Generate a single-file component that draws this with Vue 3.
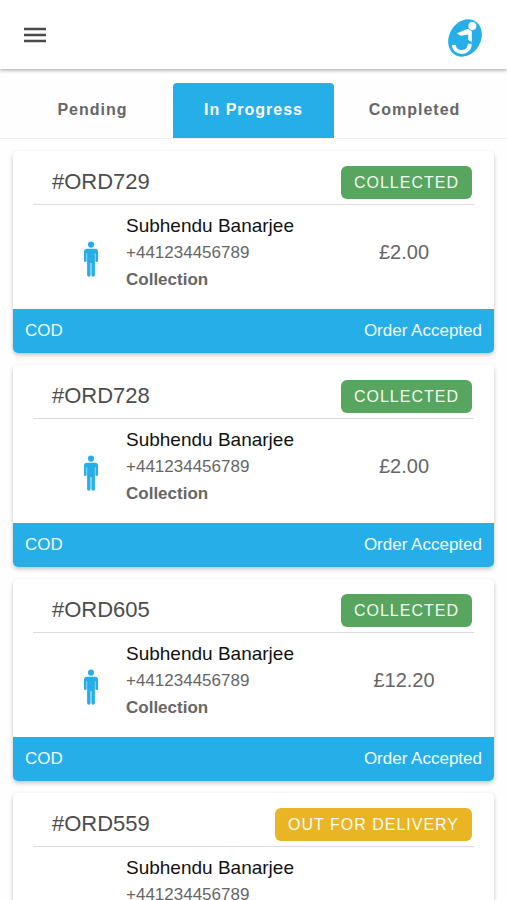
<script setup>
import { ref } from 'vue'

const tabs = ['Pending', 'In Progress', 'Completed']
const activeTab = ref('In Progress')

const customer = { name: 'Subhendu Banarjee', phone: '+441234456789' }
const orders = [
  { id: '#ORD729', status: 'Collected', tone: 'success', type: 'Collection', price: '£2.00', ...customer },
  { id: '#ORD728', status: 'Collected', tone: 'success', type: 'Collection', price: '£2.00', ...customer },
  { id: '#ORD605', status: 'Collected', tone: 'success', type: 'Collection', price: '£12.20', ...customer },
  { id: '#ORD559', status: 'Out for delivery', tone: 'warning', type: 'Delivery', price: '£12.20', ...customer },
]
</script>

<template>
  <div class="page">
    <header class="toolbar">
      <button class="menu" type="button" aria-label="Menu">
        <svg width="24" height="18" viewBox="0 0 24 18" aria-hidden="true">
          <path d="M1 3h22M1 9h22M1 15h22" stroke="#4a4a4a" stroke-width="2.4" />
        </svg>
      </button>
      <svg class="logo" width="36" height="40" viewBox="0 0 36 40" aria-hidden="true">
        <ellipse cx="18" cy="20" rx="15.8" ry="19.6" transform="rotate(30 18 20)" fill="#25aee8" />
        <path d="M9.600 15.600 L20 11 L24.800 11 L24.800 24 L21.200 22 L21.200 16.400 L14 17.800 Z" fill="#fff" />
        <circle cx="25.400" cy="8" r="4.500" fill="#fff" stroke="#25aee8" stroke-width="0.9" />
        <path d="M6.800 26.800 C7.600 36.600 22.800 36.400 22.800 25.800" fill="none" stroke="#fff" stroke-width="3.900" />
      </svg>
    </header>

    <nav class="tabs" role="tablist">
      <button
        v-for="tab in tabs"
        :key="tab"
        type="button"
        role="tab"
        class="tab"
        :class="{ active: tab === activeTab }"
        :aria-selected="tab === activeTab"
        @click="activeTab = tab"
      >{{ tab }}</button>
    </nav>

    <main class="orders">
      <article v-for="order in orders" :key="order.id" class="card">
        <div class="card-head">
          <h2 class="order-id">{{ order.id }}</h2>
          <button type="button" class="status" :class="order.tone">{{ order.status }}</button>
        </div>
        <div class="card-body" :class="{ delivery: order.type === 'Delivery' }">
          <svg class="person" width="16" height="36" viewBox="0 0 16 36" aria-hidden="true">
            <g fill="#25aee8">
              <circle cx="8" cy="3.6" r="3.1" />
              <path d="M4 7.8h8a3 3 0 0 1 3 3v9a1.3 1.3 0 0 1-2.600 0v-7.600h-.5V34a1.700 1.700 0 0 1-3.500 0V22h-.8v12a1.700 1.700 0 0 1-3.500 0V12.200h-.5v7.600a1.300 1.300 0 0 1-2.600 0v-9a3 3 0 0 1 3-3z" />
            </g>
          </svg>
          <div class="customer">
            <p class="name">{{ order.name }}</p>
            <p class="phone">{{ order.phone }}</p>
            <p class="type">{{ order.type }}</p>
          </div>
          <p class="price">{{ order.price }}</p>
        </div>
        <footer class="card-foot">
          <span>COD</span>
          <span>Order Accepted</span>
        </footer>
      </article>
    </main>
  </div>
</template>

<style>
body {
  margin: 0;
  background: #fefefe;
}
html {
  scrollbar-width: none;
}
</style>

<style scoped>
.page {
  font-family: "Liberation Sans", Arial, sans-serif;
  color: #666;
}
button {
  border: 0;
  padding: 0;
  background: none;
  font-family: inherit;
  cursor: pointer;
}
h2,
p {
  margin: 0;
  font-weight: 400;
}
.toolbar {
  display: flex;
  align-items: center;
  justify-content: space-between;
  box-sizing: border-box;
  height: 69px;
  padding: 6px 24px 0 23px;
  background: #fff;
  box-shadow: 0 1px 4px rgba(0, 0, 0, 0.4);
}
.menu {
  display: flex;
  padding-bottom: 6px;
}
.logo {
  display: block;
}
.tabs {
  display: flex;
  padding: 14px 12px 0;
  border-bottom: 1px solid #f0f0f0;
}
.tab {
  flex: 1;
  height: 55px;
  padding-bottom: 2px;
  border-radius: 4px 4px 0 0;
  font-size: 16px;
  font-weight: 700;
  letter-spacing: 1px;
  color: #666;
}
.tab.active {
  background: #25aee8;
  color: #fff;
}
.orders {
  display: flex;
  flex-direction: column;
  gap: 12px;
  padding: 12px 13px;
}
.card {
  overflow: hidden;
  border-radius: 5px;
  background: #fff;
  box-shadow: 0 2px 4px rgba(0, 0, 0, 0.24);
}
.card-head {
  display: flex;
  align-items: center;
  justify-content: space-between;
  margin: 0 20px;
  padding: 15px 2px 5px 19px;
  border-bottom: 1px solid #dcdcdc;
}
.order-id {
  padding-bottom: 2px;
  font-size: 22px;
  line-height: 30px;
  color: #4d4d4d;
}
.status {
  height: 33px;
  padding: 0 13px;
  border-radius: 6px;
  font-size: 16px;
  letter-spacing: 1px;
  text-transform: uppercase;
  color: #f4fbf2;
}
.success {
  background: #57a55f;
}
.warning {
  background: #e9b524;
}
.card-body {
  display: grid;
  grid-template-columns: 93px 1fr 140px;
  align-items: center;
  padding: 7px 20px 16px;
}
.delivery {
  min-height: 162px;
}
.person {
  justify-self: center;
  margin: 12px 0 0 23px;
}
.customer {
  align-self: start;
  font-size: 17px;
  line-height: 27px;
}
.name {
  font-size: 19px;
  color: #111;
}
.type {
  font-weight: 700;
}
.price {
  font-size: 20px;
  text-align: center;
}
.card-foot {
  display: flex;
  align-items: center;
  justify-content: space-between;
  height: 44px;
  padding: 0 12px;
  background: #25aee8;
  font-size: 17px;
  color: #f2fbff;
}
</style>
